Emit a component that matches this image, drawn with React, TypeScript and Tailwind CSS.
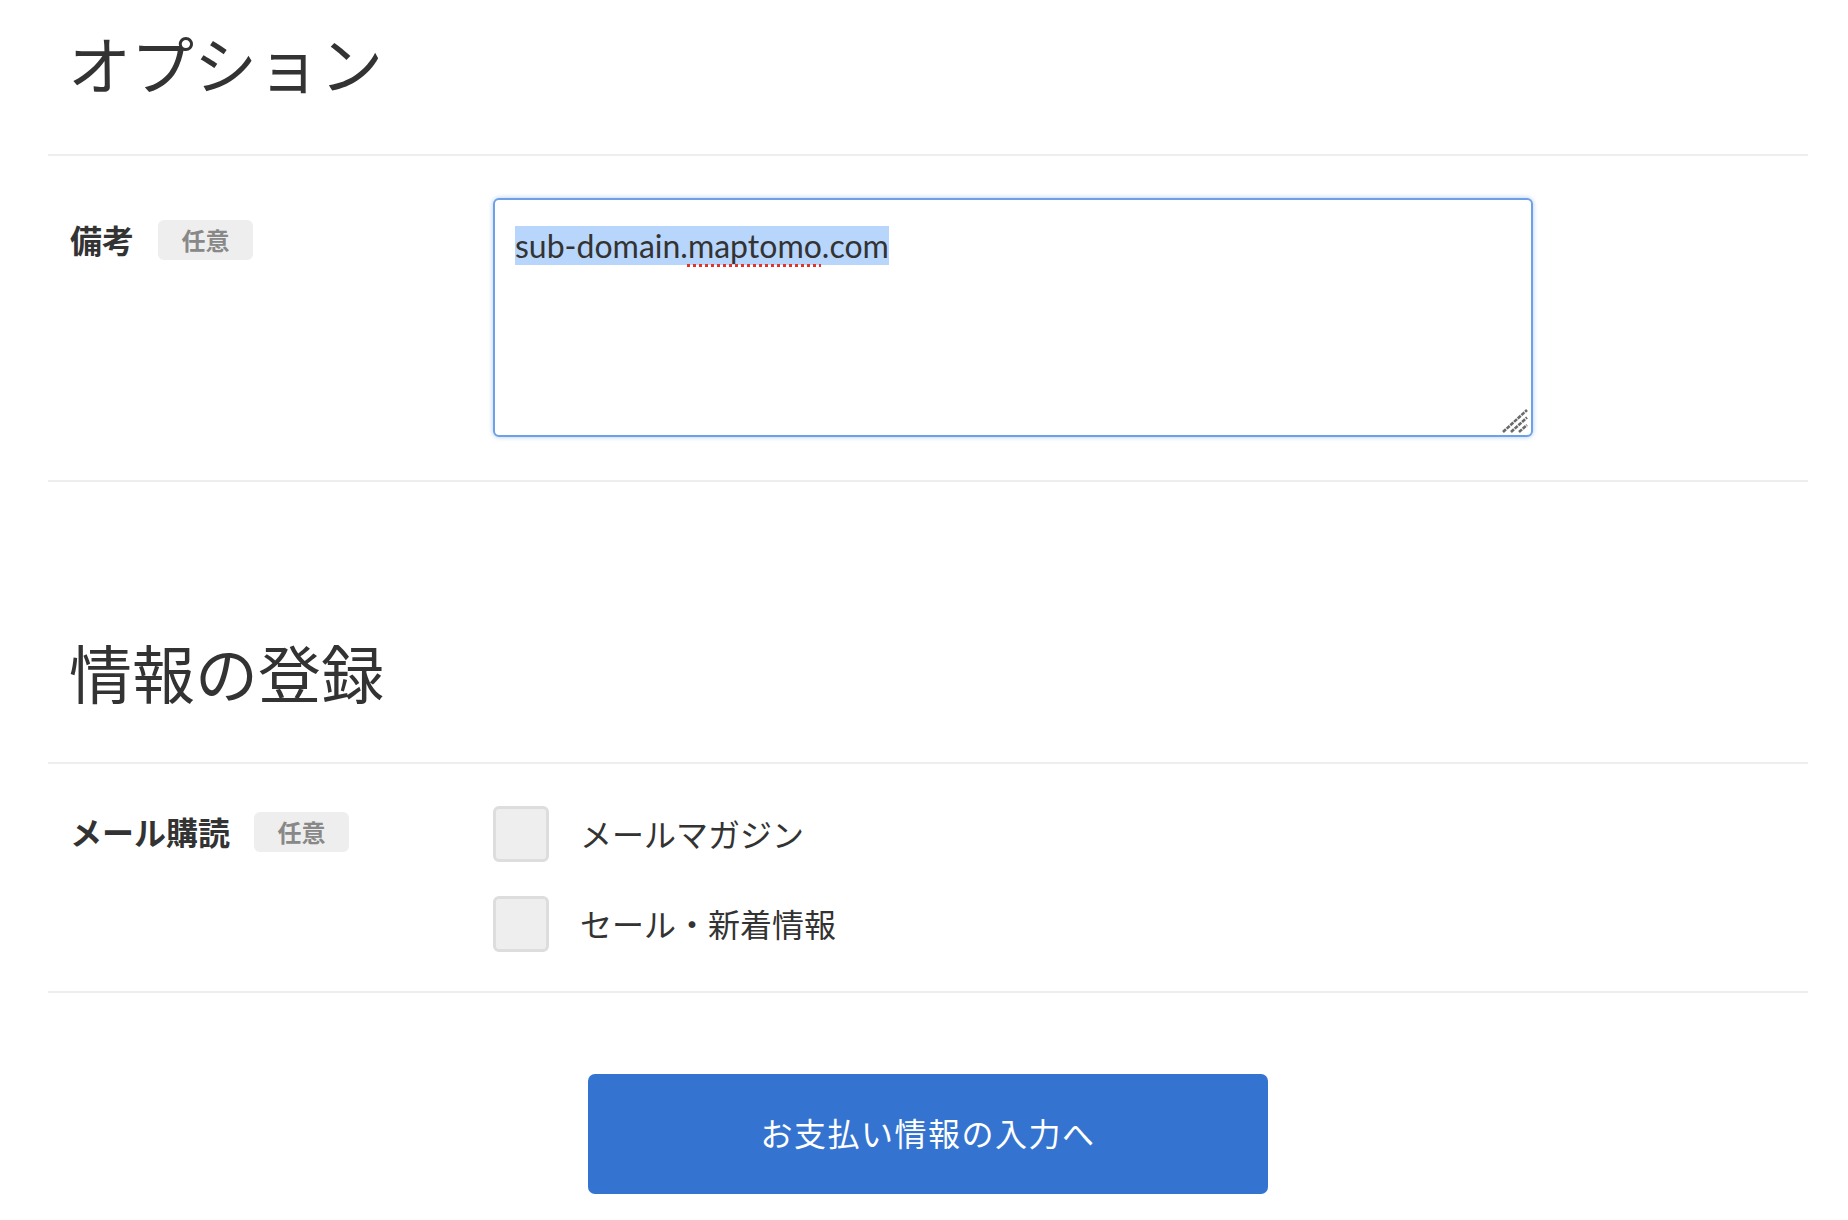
import React from "react";

function Badge() {
  return (
    <span className="ml-[24px] inline-flex h-[40px] w-[95px] items-center justify-center rounded-[6px] bg-[#eeeeee] text-[24px] font-bold text-[#888888]">
      任意
    </span>
  );
}

function ResizeHandle() {
  return (
    <svg
      className="absolute bottom-[2px] right-[2px]"
      width="28"
      height="24"
      viewBox="0 0 28 24"
      fill="none"
      stroke="#6a6a6a"
      strokeWidth="2.6"
      strokeDasharray="4 1"
    >
      <line x1="2" y1="23" x2="26" y2="1" />
      <line x1="10" y1="23" x2="26" y2="8.5" />
      <line x1="18" y1="23" x2="26" y2="16" />
    </svg>
  );
}

function Checkbox({ label }: { label: string }) {
  return (
    <label className="flex items-center">
      <span className="h-[56px] w-[56px] shrink-0 rounded-[6px] border-[3px] border-[#dddddd] bg-[#eeeeee]" />
      <span className="ml-[31px] pb-[3px] text-[32px] leading-[40px] text-[#333333]">{label}</span>
    </label>
  );
}

export default function App() {
  return (
    <div className="min-h-[1220px] bg-white pl-[48px] pr-[40px] font-['Noto_Sans_CJK_JP',sans-serif] text-[#333333]">
      <h2 className="px-[20px] pt-[16px] pb-[46px] text-[63px] font-normal leading-[92px]">
        オプション
      </h2>

      <div className="flex border-t-2 border-[#eeeeee] px-[22px] pt-[42px] pb-[43px]">
        <div className="flex w-[423px] shrink-0 items-center self-start pt-[21px]">
          <span className="pb-[2px] text-[32px] font-bold leading-[40px]">備考</span>
          <Badge />
        </div>
        <div className="relative h-[239px] w-[1040px] rounded-[6px] border-2 border-[#6ea0e6] bg-white px-[20px] pt-[22px] shadow-[0_0_5px_rgba(110,160,230,0.55)]">
          <p className="font-['Lato','Noto_Sans_CJK_JP',sans-serif] text-[32px] leading-[48px] text-[#333333]">
            <span className="bg-[#b8d6fb]">
              sub-domain.
              <span className="underline decoration-[#e5332a] decoration-dotted decoration-[3px] underline-offset-[6px]">
                maptomo
              </span>
              .com
            </span>
          </p>
          <ResizeHandle />
        </div>
      </div>

      <div className="border-t-2 border-[#eeeeee]">
        <h2 className="mt-[143px] px-[21px] pb-[45px] text-[63px] font-normal leading-[92px]">
          情報の登録
        </h2>
      </div>

      <div className="flex border-t-2 border-[#eeeeee] px-[22px] pt-[42px] pb-[39px]">
        <div className="flex w-[423px] shrink-0 items-center self-start pt-[5px]">
          <span className="pb-[2px] text-[32px] font-bold leading-[40px]">メール購読</span>
          <Badge />
        </div>
        <div className="flex flex-col gap-[34px]">
          <Checkbox label="メールマガジン" />
          <Checkbox label="セール・新着情報" />
        </div>
      </div>

      <div className="flex justify-center border-t-2 border-[#eeeeee] pt-[81px]">
        <button className="flex h-[120px] w-[680px] items-center justify-center rounded-[7px] bg-[#3474d0] pb-[4px] text-[32px] tracking-[1.5px] text-white">
          お支払い情報の入力へ
        </button>
      </div>
    </div>
  );
}
